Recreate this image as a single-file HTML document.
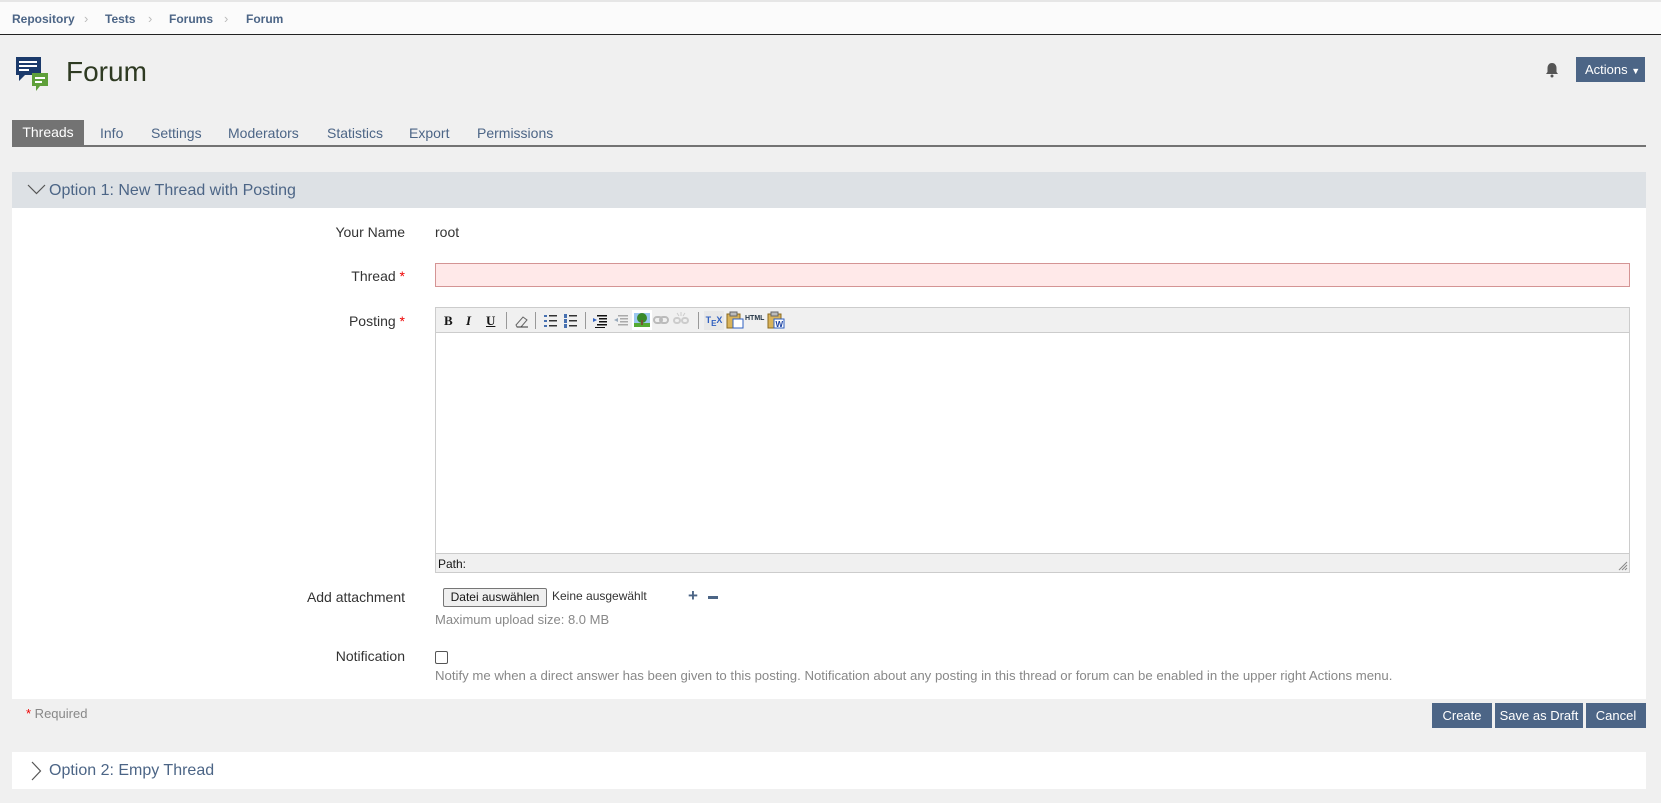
<!DOCTYPE html>
<html><head><meta charset="utf-8"><style>
*{box-sizing:border-box;margin:0;padding:0}
body{width:1661px;height:803px;background:#f0f0f0;font-family:"Liberation Sans",sans-serif;position:relative;overflow:hidden;color:#161616}
.a{position:absolute}
.bc{top:0;left:0;width:1661px;height:35px;background:#fbfbfb;border-top:2px solid #e6e6e6;border-bottom:1px solid #222}
.bc span{position:absolute;top:10px;font-size:12px;color:#4c6586;font-weight:bold}
.bc i{position:absolute;top:9px;font-style:normal;color:#bbb;font-size:13px}
.tab{top:121px;height:25px;font-size:14px;color:#4c6586;line-height:25px}
.lbl{font-size:14px;color:#333;text-align:right;width:300px;left:105px}
.btn{background:#4c6586;color:#fff;font-size:13px;text-align:center;line-height:25px;height:25px;top:703px}
.tb{top:314px;font-size:12px;line-height:14px}
.sep{top:312px;width:1px;height:17px;background:#999}
</style></head><body>
<div class="a bc">
<span style="left:12px">Repository</span><i style="left:84px">&#x203A;</i>
<span style="left:105px">Tests</span><i style="left:148px">&#x203A;</i>
<span style="left:169px">Forums</span><i style="left:224px">&#x203A;</i>
<span style="left:246px">Forum</span>
</div>
<svg class="a" style="left:15px;top:56px" width="36" height="36" viewBox="0 0 36 36">
<path d="M1 1h25v18H10l-6 6v-6H1z" fill="#1b3a6b"/>
<rect x="4" y="5" width="18" height="2" fill="#fff"/><rect x="4" y="9" width="18" height="2" fill="#fff"/><rect x="4" y="13" width="10" height="2" fill="#fff"/>
<path d="M17 17h16v13h-8l-4 5v-5h-4z" fill="#5fa03a"/>
<rect x="20" y="21" width="10" height="2" fill="#fff"/><rect x="20" y="25" width="7" height="2" fill="#fff"/>
</svg>
<div class="a" style="left:66px;top:56px;font-size:28px;color:#2e3a22">Forum</div>
<svg class="a" style="left:1545px;top:62px" width="14" height="16" viewBox="0 0 14 16"><path d="M7 1c3 0 4.5 2.5 4.5 5v4l1.5 2H1l1.5-2V6C2.5 3.5 4 1 7 1z" fill="#555"/><circle cx="7" cy="14" r="1.5" fill="#555"/></svg>
<div class="a" style="left:1576px;top:57px;width:69px;height:25px;background:#4c6586;color:#fff;font-size:13px;line-height:25px;padding-left:9px">Actions <span style="font-size:9px">&#9660;</span></div>
<div class="a tab" style="left:12px;width:72px;background:#737373;color:#fff;text-align:center;top:120px">Threads</div>
<div class="a tab" style="left:100px">Info</div>
<div class="a tab" style="left:151px">Settings</div>
<div class="a tab" style="left:228px">Moderators</div>
<div class="a tab" style="left:327px">Statistics</div>
<div class="a tab" style="left:409px">Export</div>
<div class="a tab" style="left:477px">Permissions</div>
<div class="a" style="left:12px;top:145px;width:1634px;height:2px;background:#737373"></div>
<div class="a" style="left:12px;top:172px;width:1634px;height:36px;background:#dde1e5"></div>
<svg class="a" style="left:27px;top:184px" width="19" height="11"><path d="M1 1l8.5 8.5L18 1" fill="none" stroke="#555" stroke-width="1.2"/></svg>
<div class="a" style="left:49px;top:182px;font-size:16px;color:#4c6586">Option 1: New Thread with Posting</div>
<div class="a" style="left:12px;top:208px;width:1634px;height:491px;background:#fff"></div>
<div class="a lbl" style="top:224px">Your Name</div>
<div class="a" style="left:435px;top:224px;font-size:14px;color:#333">root</div>
<div class="a lbl" style="top:268px">Thread <span style="color:#e00">*</span></div>
<div class="a" style="left:435px;top:263px;width:1195px;height:24px;background:#ffe9e9;border:1px solid #d49494"></div>
<div class="a lbl" style="top:313px">Posting <span style="color:#e00">*</span></div>
<div class="a" style="left:435px;top:307px;width:1195px;height:266px;border:1px solid #ccc;background:#fff"></div>
<div class="a" style="left:436px;top:308px;width:1193px;height:25px;background:#f0f0f0;border-bottom:1px solid #ccc"></div>
<div class="a tb" style="left:444px;font-weight:bold;font-family:'Liberation Serif',serif;font-size:13px">B</div>
<div class="a tb" style="left:466px;font-weight:bold;font-style:italic;font-family:'Liberation Serif',serif;font-size:13px">I</div>
<div class="a tb" style="left:486px;font-weight:bold;text-decoration:underline;font-family:'Liberation Serif',serif;font-size:13px">U</div>
<div class="a sep" style="left:506px"></div>
<svg class="a" style="left:513px;top:313px" width="16" height="16"><path d="M3 12l7-8 4 3-6 7H4z" fill="#eee" stroke="#666"/><path d="M4 14h11" stroke="#333"/></svg>
<div class="a sep" style="left:535px"></div>
<svg class="a" style="left:543px;top:313px" width="16" height="16"><g fill="#333"><rect x="1" y="2" width="3" height="2" fill="#4670b0"/><rect x="1" y="7" width="3" height="2" fill="#4670b0"/><rect x="1" y="12" width="3" height="2" fill="#4670b0"/><rect x="6" y="2" width="8" height="1.5"/><rect x="6" y="7" width="8" height="1.5"/><rect x="6" y="12" width="8" height="1.5"/></g></svg>
<svg class="a" style="left:563px;top:313px" width="16" height="16"><g fill="#333"><rect x="1" y="1" width="3" height="4" fill="#4670b0"/><rect x="1" y="6" width="3" height="4" fill="#4670b0"/><rect x="1" y="11" width="3" height="4" fill="#4670b0"/><rect x="6" y="2" width="8" height="1.5"/><rect x="6" y="7" width="8" height="1.5"/><rect x="6" y="12" width="8" height="1.5"/></g></svg>
<div class="a sep" style="left:585px"></div>
<svg class="a" style="left:592px;top:313px" width="16" height="16"><g fill="#111"><rect x="5" y="2" width="10" height="1.5"/><rect x="7" y="5" width="8" height="1.5"/><rect x="7" y="8" width="8" height="1.5"/><rect x="5" y="11" width="10" height="1.5"/><rect x="3" y="14" width="10" height="1"/></g><path d="M1 5l4 2-4 2z" fill="#3060c0"/></svg>
<svg class="a" style="left:613px;top:313px" width="16" height="16"><g fill="#aaa"><rect x="5" y="2" width="10" height="1.5"/><rect x="7" y="5" width="8" height="1.5"/><rect x="7" y="8" width="8" height="1.5"/><rect x="5" y="11" width="10" height="1.5"/></g><path d="M5 5l-4 2 4 2z" fill="#9ab"/></svg>
<svg class="a" style="left:632px;top:310px" width="20" height="20"><rect width="20" height="20" fill="#fff"/><rect x="2" y="3" width="16" height="14" fill="#9cc8f0"/><rect x="2" y="13" width="16" height="4" fill="#5a3"/><circle cx="10" cy="8" r="5" fill="#3a8a2a"/><rect x="9" y="10" width="2" height="5" fill="#753"/></svg>
<svg class="a" style="left:653px;top:315px" width="16" height="10"><g fill="none" stroke="#bbb" stroke-width="2"><rect x="1" y="2" width="8" height="6" rx="3"/><rect x="7" y="2" width="8" height="6" rx="3"/></g></svg>
<svg class="a" style="left:673px;top:312px" width="16" height="16"><g fill="none" stroke="#ccc" stroke-width="2"><rect x="1" y="6" width="6" height="5" rx="2.5"/><rect x="9" y="6" width="6" height="5" rx="2.5"/></g><path d="M8 0v4M4 1l2 3M12 1l-2 3" stroke="#ccc"/></svg>
<div class="a sep" style="left:698px"></div>
<div class="a" style="left:704px;top:311px;width:20px;height:19px;background:#e8e8e8;color:#3060c0;font-size:9px;line-height:19px;text-align:center;font-weight:bold">T<sub style="font-size:8px">E</sub>X</div>
<svg class="a" style="left:726px;top:311px" width="18" height="18"><rect x="1" y="3" width="13" height="14" fill="#d9b35a" stroke="#8a6a20"/><rect x="4" y="1" width="7" height="4" fill="#bbb" stroke="#666"/><rect x="7" y="8" width="10" height="9" fill="#fff" stroke="#3060c0"/></svg>
<div class="a" style="left:745px;top:315px;font-size:7px;font-weight:bold;color:#234">HTML</div>
<svg class="a" style="left:767px;top:311px" width="18" height="18"><rect x="1" y="3" width="13" height="14" fill="#d9b35a" stroke="#8a6a20"/><rect x="4" y="1" width="7" height="4" fill="#bbb" stroke="#666"/><rect x="7" y="8" width="10" height="9" fill="#fff" stroke="#3060c0"/><text x="8.5" y="16" font-size="8" fill="#1a40a0" font-family="Liberation Sans" font-weight="bold">W</text></svg>
<div class="a" style="left:436px;top:553px;width:1193px;height:19px;background:#f0f0f0;border-top:1px solid #ccc;font-size:12px;padding:3px 2px">Path:</div>
<svg class="a" style="left:1618px;top:561px" width="10" height="10"><path d="M9 1L1 9M9 4L4 9M9 7L7 9" stroke="#888"/></svg>
<div class="a lbl" style="top:589px">Add attachment</div>
<div class="a" style="left:443px;top:588px;width:104px;height:19px;background:#efefef;border:1px solid #767676;border-radius:2px;font-size:12px;text-align:center;line-height:17px">Datei auswählen</div>
<div class="a" style="left:552px;top:589px;font-size:12px;color:#333">Keine ausgewählt</div>
<div class="a" style="left:688px;top:586px;font-size:17px;font-weight:bold;color:#4c6586">+</div>
<div class="a" style="left:708px;top:596px;width:10px;height:3px;background:#4c6586"></div>
<div class="a" style="left:435px;top:612px;font-size:13px;color:#888">Maximum upload size: 8.0 MB</div>
<div class="a lbl" style="top:648px">Notification</div>
<div class="a" style="left:435px;top:651px;width:13px;height:13px;border:1px solid #555;border-radius:2px;background:#fff"></div>
<div class="a" style="left:435px;top:668px;font-size:13.2px;color:#888">Notify me when a direct answer has been given to this posting. Notification about any posting in this thread or forum can be enabled in the upper right Actions menu.</div>
<div class="a" style="left:26px;top:706px;font-size:13px;color:#888"><span style="color:#e00">*</span> Required</div>
<div class="a btn" style="left:1432px;width:60px">Create</div>
<div class="a btn" style="left:1495px;width:88px">Save as Draft</div>
<div class="a btn" style="left:1586px;width:60px">Cancel</div>
<div class="a" style="left:12px;top:752px;width:1634px;height:37px;background:#fff"></div>
<svg class="a" style="left:31px;top:761px" width="11" height="20"><path d="M1 1l8.5 9L1 19" fill="none" stroke="#555" stroke-width="1.2"/></svg>
<div class="a" style="left:49px;top:762px;font-size:16px;color:#4c6586">Option 2: Empy Thread</div>
</body></html>
